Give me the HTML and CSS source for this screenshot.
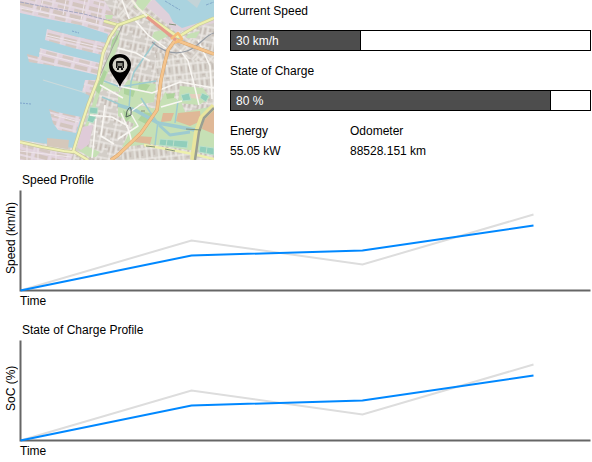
FILE: index.html
```html
<!DOCTYPE html>
<html lang="en">
<head>
<meta charset="utf-8">
<title>Vehicle status</title>
<link rel="stylesheet" href="styles.css">
</head>
<body>
<main class="dashboard">
  <section class="overview">
    <svg class="map" viewBox="0 0 194 160" role="img" aria-label="Vehicle position">
      <defs>
        <pattern id="streets-a" width="13" height="15" patternUnits="userSpaceOnUse" patternTransform="rotate(12)">
          <rect width="13" height="15" fill="#d3cec8"/>
          <path d="M3 0V15M8 2V12M0 2H13M0 12H8M8 8H13" stroke="#f2efec" stroke-width="1.1"/>
          <path d="M5.500 4V10M10.500 4V7M1 5V10" stroke="#c4bab3" stroke-width="1.400"/>
        </pattern>
        <pattern id="streets-b" width="14" height="13" patternUnits="userSpaceOnUse" patternTransform="rotate(40)">
          <rect width="14" height="13" fill="#d4cec7"/>
          <path d="M2 0V13M9 0V9M0 1H14M2 7H14M5 7V13" stroke="#f2efeb" stroke-width="1.100"/>
          <path d="M4 4H7M11 4H13M7 10H12" stroke="#c2b8b1" stroke-width="1.400"/>
        </pattern>
        <pattern id="streets-c" width="12" height="16" patternUnits="userSpaceOnUse" patternTransform="rotate(-6)">
          <rect width="12" height="16" fill="#d4cfc8"/>
          <path d="M2 0V16M7 0V11M0 1H12M0 11H12M10 11V16" stroke="#f2f0ec" stroke-width="1.100"/>
          <path d="M4.500 3V9M9.500 3V8M5 13.500H8" stroke="#c3bab3" stroke-width="1.500"/>
        </pattern>
        <pattern id="sheds" width="17" height="12" patternUnits="userSpaceOnUse" patternTransform="rotate(14)">
          <rect width="17" height="12" fill="#e2d3dd"/>
          <rect x="1" y="1" width="13" height="4" fill="#d3c5bf"/>
          <rect x="4" y="7" width="11" height="3" fill="#d5c8c3"/>
          <path d="M0 6H17M16 0V12" stroke="#e9dfe5"/>
        </pattern>
      </defs>
      <rect width="194" height="160" fill="url(#streets-a)"/>
      <path d="M98 0H136L156 26 194 54V78H143L150 48 126 16 98 24Z" fill="url(#streets-b)"/>
      <path d="M136 52 194 64V104H136Z" fill="url(#streets-c)"/>
      <path d="M112 142 194 158V160H98Z" fill="url(#streets-c)"/>

      <!-- harbour -->
      <path d="M0 0H84L100 25 88 40 0 16Z" fill="url(#sheds)"/>
      <path d="M0 13 33 20 60 25 88 34 84 53 77 82 62 122 53 148 28 144 0 140Z" fill="#aad3df"/>
      <g fill="url(#sheds)">
        <path d="M27 29 58 37 87 43 82 55 53 48 25 40Z"/>
        <path d="M20 48 47 55 80 63 77 75 47 68 9 62 7 54 19 57Z"/>
        <path d="M29 109 37 112 61 117 56 133 38 130 33 123Z"/>
        <path d="M65 80H78L70 96 62 92Z"/>
        <path d="M0 143 54 152 51 160H0Z"/>
      </g>
      <path d="M27 138 49 140 48 149 27 146Z" fill="#d5c8bb"/>
      <g fill="none" stroke="#eee5ea">
        <path d="M0 8 40 16 68 22 92 29M26 35 82 48M19 53 78 68M34 115 59 122" />
        <path d="M46 0 43 15M23 0 20 11M65 0 61 20M80 2 76 24M7 144V160M18 146V160M36 149V160M0 151 51 157"/>
        <path d="M23 80 66 93" stroke="#cbdadb" stroke-width="1.300"/>
      </g>
      <path d="M0 2 26 7 64 14 90 21" fill="none" stroke="#a5a6c0" stroke-width="1" stroke-dasharray="4 1"/>
      <g fill="none" stroke="#7fa5cc" stroke-width="1">
        <path d="M52 31 59 33M0 103 11 104" stroke-dasharray="2 1"/>
      </g>

      <!-- northern docks -->
      <path d="M132 0H194V23L174 28 156 32 126 6Z" fill="#dfd0da"/>
      <path d="M135 0H194V17L178 23 162 28 153 22 149 14Z" fill="#aad3df"/>
      <path d="M145 1 160 10M186 5 194 2" stroke="#83aacb" stroke-dasharray="3 1"/>
      <path d="M167 0 177 8 181 0Z" fill="#c3d3d7"/>

      <!-- green areas -->
      <g fill="#c6e0b5">
        <path d="M134 32 142 30 148 36 138 41 132 37Z"/>
        <path d="M117 0 131 0 122 12 114 7Z"/>
        <path d="M85 15 93 15 92 19 86 19Z"/>
        <path d="M168 34 180 31 176 38 166 38Z"/>
        <path d="M95 30 97 38 88 56 80 80 68 118 57 146 58 148 74 112 82 86 92 64 99 42 100 31Z"/>
        <path d="M80 84 88 82 99 88 99 92 84 90Z"/>
        <path d="M98 94 108 80 136 84 134 102 117 105 137 109 145 92 161 102 165 112 194 106V151L169 150 130 144 102 147 114 124 98 116Z"/>
        <path d="M58 150 66 146 80 152 76 157 69 157Z"/>
        <path d="M160 86 183 88 190 98 179 105 158 103Z"/>
      </g>
      <g fill="#add39c">
        <path d="M104 88 115 91 113 97 104 94ZM119 82 130 85 126 91 118 89ZM103 110 112 116 106 122ZM124 112 134 114 126 124 118 120ZM146 94 155 93 154 98 147 99Z"/>
        <path d="M75 90 84 70 87 72 79 94ZM92 40 97 34 98 39 90 51Z"/>
      </g>
      <path d="M62 127 73 125 69 144 61 150 57 147Z" fill="#dfcbd8"/>
      <g fill="#dfb897">
        <path d="M143 113 154 113 151 121 141 122ZM158 113 180 111 181 121 170 126 156 121ZM184 116 194 108V134L182 129ZM117 136 132 137 130 144 115 142Z"/>
      </g>
      <path d="M162 94H182L180 99 171 98 164 101Z" fill="#e3cebd"/>

      <!-- canals and ponds -->
      <g fill="none" stroke="#9ecbd0" stroke-linejoin="round">
        <path d="M135 42 125 56 114 72 111 82 109 108" stroke-width="1.500"/>
        <path d="M98 105 115 110 138 123 160 127 180 131" stroke-width="3.500"/>
        <path d="M138 121 135 145M121 98 130 112 138 123M82 97 99 104M158 101 155 123M84 81 100 87 136 81" stroke-width="1.500"/>
        <path d="M170 132 150 135 139 125" stroke-width="3"/>
      </g>
      <g fill="#91cebb" stroke="#bde0ca">
        <path d="M70 107 78 108 77 114 69 113ZM69 115 76 117 73 123 67 121ZM140 139 168 141 167 148 139 145ZM180 146 194 148V155L179 152ZM161 95 169 93 171 100 163 101ZM182 93 189 96 186 102 180 98Z"/>
        <path d="M154 140 153 147M147 140 146 146M187 147 186 154"/>
      </g>

      <!-- streets -->
      <g fill="none" stroke="#f9f7f3" stroke-width="1.500" stroke-linejoin="round">
        <path d="M115 20 128 35 146 48M98 48 116 53 130 61M98 86 132 93 160 82 194 88M160 50 168 61 173 80 179 105"/>
        <path d="M98 139 118 126 110 112 123 103M101 113 109 131 112 143M141 107 162 101M102 0 110 21M80 85 103 98M70 115 92 117 108 126M178 40 190 66 192 99"/>
        <path d="M76 119 72 158M85 105 81 136 94 144"/>
      </g>
      <path d="M132 42C144 53 155 55 167 51S185 35 194 33" fill="none" stroke="#969ca4" stroke-width="1.200"/>
      <path d="M78 80 103 24" stroke="#a8a6a2" stroke-width="1"/>
      <g fill="none" stroke-linejoin="round">
        <path d="M84 21 98 25 126 15 145 28 158 37 178 25 194 18" stroke="#c9ce99" stroke-width="3.500"/>
        <path d="M84 21 98 25 126 15 145 28 158 37 178 25 194 18" stroke="#edf0ad" stroke-width="2.200"/>
        <path d="M98 25 90 37 83 53 78 79 68 105 62 123 53 152 44 151 22 147 0 142M53 151 68 160" stroke="#c7c899" stroke-width="3.500"/>
        <path d="M98 25 90 37 83 53 78 79 68 105 62 123 53 152 44 151 22 147 0 142M53 151 68 160" stroke="#f1f2b5" stroke-width="2.200"/>
        <path d="M124 145 141 148 173 154 194 159" stroke="#edf0ad" stroke-width="2.500"/>
        <path d="M112 0 118 8 127 16" stroke="#f3f1e3" stroke-width="2"/>
        <path d="M156 39 148 50 144 66 141 80 137 110 121 133 98 155 91 160M156 40 194 54" stroke="#d7a66f" stroke-width="3.500"/>
        <path d="M156 39 148 50 144 66 141 80 137 110 121 133 98 155 91 160M156 40 194 54" stroke="#f5c48c" stroke-width="2.500"/>
        <path d="M127 17 156 40" stroke="#e69b89" stroke-width="3"/>
        <path d="M151 39 158 33 162 39 155 43" stroke="#f5bd78" stroke-width="2.500"/>
        <path d="M194 106 182 118 177 132 173 160" stroke="#e9e59d" stroke-width="6"/>
        <path d="M194 108 184 118 179 132 175 160" stroke="#999e93" stroke-width="2.500"/>
        <path d="M107 111Q112 102 111 115L106 117Z" stroke="#52625a" stroke-width="1"/>
      </g>
      <path d="M126 146 135 147M145 149 155 151M166 129 181 130M121 111 125 111M149 24 156 25" stroke="#829078" stroke-width="1"/>

      <!-- vehicle marker -->
      <path d="M100 87C97 79 89 73 89 65A11 11 0 0 1 111 65C111 73 103 79 100 87Z" fill="#000"/>
      <circle cx="100" cy="65" r="7.500" fill="#d2d1c7"/>
      <path d="M97 61H103Q104 61 104 62V68H103V70H101V68H99V70H97V68H96V62Q96 61 97 61Z" fill="#181818"/>
      <path d="M97.500 63H102.500V66H97.500Z" fill="#8b8c83"/>
      <path d="M97 67H98M102 67H103" stroke="#d2d1c7"/>
    </svg>

    <div class="status">
      <div class="label" id="speed-label">Current Speed</div>
      <div class="bar" role="meter" aria-labelledby="speed-label" aria-valuenow="30">
        <div class="bar-fill" style="width: 36.2%">30 km/h</div>
      </div>
      <div class="label" id="charge-label">State of Charge</div>
      <div class="bar" role="meter" aria-labelledby="charge-label" aria-valuenow="80">
        <div class="bar-fill" style="width: 89.1%">80 %</div>
      </div>
      <dl class="readings">
        <div><dt>Energy</dt><dd>55.05 kW</dd></div>
        <div><dt>Odometer</dt><dd>88528.151 km</dd></div>
      </dl>
    </div>
  </section>

  <section class="profile">
    <h2 class="profile-title">Speed Profile</h2>
    <div class="axis-y">Speed (km/h)</div>
    <svg class="plot" viewBox="0 0 572 102" preserveAspectRatio="none" role="img" aria-label="Speed over time">
      <polyline class="line planned" points="1.5,100.5 172.5,50.5 343.5,74.5 514.5,24.5"/>
      <path class="axis" d="M1.500 .5V100.500H571.500"/>
      <polyline class="line actual" points="1.5,100.5 172.5,65.5 343.5,60.5 514.5,35.5"/>
    </svg>
    <div class="axis-x">Time</div>
  </section>

  <section class="profile">
    <h2 class="profile-title">State of Charge Profile</h2>
    <div class="axis-y">SoC (%)</div>
    <svg class="plot" viewBox="0 0 572 102" preserveAspectRatio="none" role="img" aria-label="State of charge over time">
      <polyline class="line planned" points="1.5,100.5 172.5,50.5 343.5,74.5 514.5,24.5"/>
      <path class="axis" d="M1.500 .5V100.500H571.500"/>
      <polyline class="line actual" points="1.5,100.5 172.5,65.5 343.5,60.5 514.5,35.5"/>
    </svg>
    <div class="axis-x">Time</div>
  </section>
</main>
</body>
</html>
```
FILE: styles.css
```css
* {
  box-sizing: border-box;
}

body {
  margin: 0;
  background: #fff;
  color: #000;
  font: 12px/20px "Liberation Sans", Arial, sans-serif;
}

.overview {
  display: flex;
  gap: 16px;
  padding: 0 1px 0 20px;
}

.map {
  flex: none;
  width: 194px;
  height: 160px;
}

.status {
  flex: 1;
  padding-top: 1px;
}

.bar {
  height: 21px;
  margin: 9px 0 10px;
  border: 1px solid #000;
}

.bar-fill {
  height: 100%;
  padding-left: 5px;
  border-right: 1px solid #000;
  background: #4d4d4d;
  color: #fff;
}

.readings {
  display: flex;
  margin: 0;
}

.readings div {
  flex: 0 0 120px;
}

.readings dd {
  margin: 0;
}

.profile {
  display: grid;
  grid-template-columns: 19px 1fr;
  margin-top: 9px;
  padding: 0 1px 1px 0;
}

.profile-title {
  grid-column: 2;
  margin: 0;
  padding-left: 3px;
  font-size: 12px;
  font-weight: normal;
}

.axis-y {
  padding: 6px 3px 0 0;
  writing-mode: vertical-rl;
  transform: rotate(180deg);
  line-height: 16px;
  text-align: center;
}

.plot {
  display: block;
  width: 100%;
  height: 102px;
}

.axis-x {
  grid-column: 2;
  padding-left: 1px;
  line-height: 18px;
}

.axis,
.line {
  fill: none;
  stroke-width: 2px;
  vector-effect: non-scaling-stroke;
}

.axis {
  stroke: #666;
}

.planned {
  stroke: #ddd;
}

.actual {
  stroke: #08f;
}
```
